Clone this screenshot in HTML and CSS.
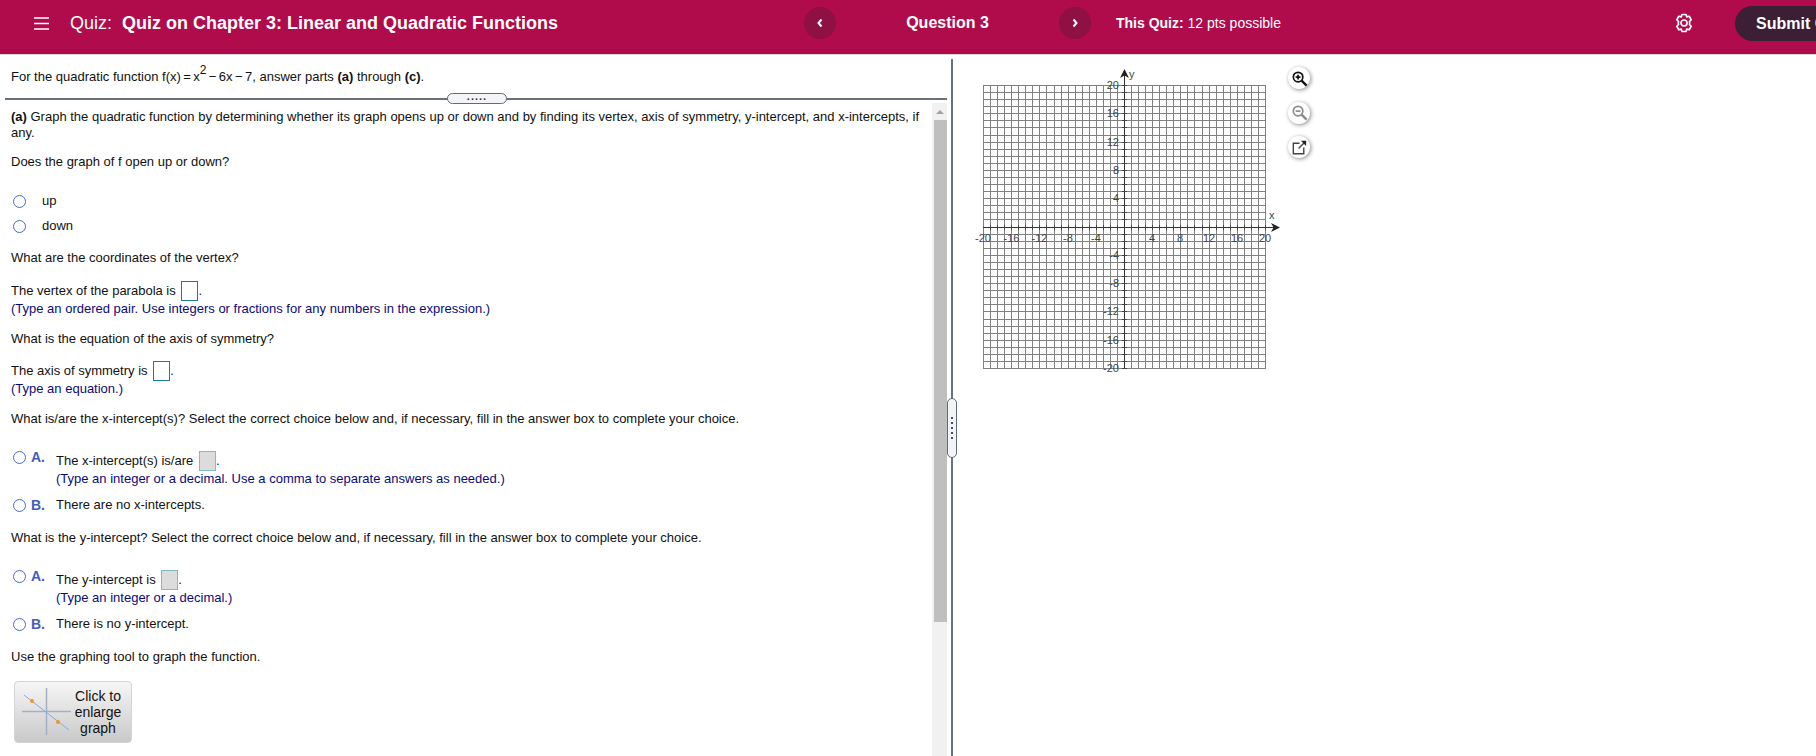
FILE: index.html
```html
<!DOCTYPE html>
<html lang="en">
<head>
<meta charset="utf-8">
<title>Quiz on Chapter 3</title>
<link rel="stylesheet" href="styles.css">
</head>
<body>
<header class="topbar">
  <div class="title-block">
    <svg class="burger" viewBox="0 0 15 13"><path d="M0 1h15M0 6.500h15M0 12h15"/></svg>
    <span class="quiz-title">Quiz:&nbsp; <b>Quiz on Chapter 3: Linear and Quadratic Functions</b></span>
  </div>
  <button class="nav-btn"><svg viewBox="0 0 10 12"><path d="M6.500 2.500 3.500 6l3 3.500"/></svg></button>
  <div class="question-no">Question 3</div>
  <button class="nav-btn"><svg viewBox="0 0 10 12"><path d="M3.500 2.500 6.500 6l-3 3.500"/></svg></button>
  <div class="quiz-info"><b>This Quiz:</b> 12 pts possible</div>
  <svg class="gear" viewBox="0 0 20 20"><path d="M8 1.500h4l.8 2.400 2.400-.6 2 3.400L15.500 8.500a6 6 0 0 1 0 3l1.700 1.800-2 3.400-2.400-.6-.8 2.400H8l-.8-2.400-2.400.6-2-3.400 1.700-1.800a6 6 0 0 1 0-3L2.800 6.700l2-3.400 2.400.6z"/><circle cx="10" cy="10" r="3"/></svg>
  <div class="submit">Submit Quiz</div>
</header>

<main class="workspace">
  <section class="question-pane">
    <div class="statement">For the quadratic function <span class="math">f(x) = x<sup>2</sup> &minus; 6x &minus; 7,</span> answer parts <b>(a)</b> through <b>(c)</b>.</div>
    <div class="rule"><span class="grip-h">.....</span></div>
    <div class="pane-body">
      <div class="question">
        <p><b>(a)</b> Graph the quadratic function by determining whether its graph opens up or down and by finding its vertex, axis of symmetry, y-intercept, and x-intercepts, if<br>any.</p>
        <p class="g13">Does the graph of f open up or down?</p>
        <label class="choice g23"><i class="radio"></i><span>up</span></label>
        <label class="choice g9"><i class="radio"></i><span>down</span></label>
        <p class="g16">What are the coordinates of the vertex?</p>
        <p class="g15 box-line">The vertex of the parabola is <i class="answer"></i>.</p>
        <p class="hint">(Type an ordered pair. Use integers or fractions for any numbers in the expression.)</p>
        <p class="g14">What is the equation of the axis of symmetry?</p>
        <p class="g14 box-line">The axis of symmetry is <i class="answer"></i>.</p>
        <p class="hint">(Type an equation.)</p>
        <p class="g14">What is/are the x-intercept(s)? Select the correct choice below and, if necessary, fill in the answer box to complete your choice.</p>
        <div class="option g24">
          <i class="radio"></i><b class="letter">A.</b>
          <div class="option-text">
            <p class="box-line">The x-intercept(s) is/are <i class="answer off"></i>.</p>
            <p class="hint">(Type an integer or a decimal. Use a comma to separate answers as needed.)</p>
          </div>
        </div>
        <div class="option g10 single">
          <i class="radio"></i><b class="letter">B.</b>
          <div class="option-text"><p>There are no x-intercepts.</p></div>
        </div>
        <p class="g17">What is the y-intercept? Select the correct choice below and, if necessary, fill in the answer box to complete your choice.</p>
        <div class="option g24">
          <i class="radio"></i><b class="letter">A.</b>
          <div class="option-text">
            <p class="box-line">The y-intercept is <i class="answer off"></i>.</p>
            <p class="hint">(Type an integer or a decimal.)</p>
          </div>
        </div>
        <div class="option g10 single">
          <i class="radio"></i><b class="letter">B.</b>
          <div class="option-text"><p>There is no y-intercept.</p></div>
        </div>
        <p class="g17">Use the graphing tool to graph the function.</p>
        <button class="enlarge">
          <svg viewBox="0 0 54 54"><path class="ax" d="M27.500 3v47M3 26.500h49"/><path class="ln" d="M5 10 50 45"/><circle cx="13" cy="16" r="2"/><circle cx="39" cy="37" r="2"/></svg>
          <span>Click to<br>enlarge<br>graph</span>
        </button>
      </div>
      <div class="scrollbar"><span class="arrow"></span><span class="thumb"></span></div>
    </div>
  </section>

  <div class="divider"><span class="grip-v"><i></i><i></i><i></i><i></i><i></i></span></div>

  <section class="graph-pane">
    <svg class="graph" viewBox="970 65 320 320">
      <path class="grid" d="M983.500 85V368M990.500 85V368M997.500 85V368M1004.500 85V368M1011.500 85V368M1018.500 85V368M1025.500 85V368M1032.500 85V368M1039.500 85V368M1046.500 85V368M1054.500 85V368M1061.500 85V368M1068.500 85V368M1075.500 85V368M1082.500 85V368M1089.500 85V368M1096.500 85V368M1103.500 85V368M1110.500 85V368M1117.500 85V368M1131.500 85V368M1138.500 85V368M1145.500 85V368M1152.500 85V368M1159.500 85V368M1166.500 85V368M1173.500 85V368M1180.500 85V368M1187.500 85V368M1194.500 85V368M1202.500 85V368M1209.500 85V368M1216.500 85V368M1223.500 85V368M1230.500 85V368M1237.500 85V368M1244.500 85V368M1251.500 85V368M1258.500 85V368M1265.500 85V368"/>
      <path class="grid" d="M983 85.500H1266M983 92.500H1266M983 99.500H1266M983 106.500H1266M983 113.500H1266M983 120.500H1266M983 127.500H1266M983 135.500H1266M983 142.500H1266M983 149.500H1266M983 156.500H1266M983 163.500H1266M983 170.500H1266M983 177.500H1266M983 184.500H1266M983 191.500H1266M983 198.500H1266M983 205.500H1266M983 212.500H1266M983 219.500H1266M983 234.500H1266M983 241.500H1266M983 248.500H1266M983 255.500H1266M983 262.500H1266M983 269.500H1266M983 276.500H1266M983 283.500H1266M983 290.500H1266M983 297.500H1266M983 304.500H1266M983 311.500H1266M983 319.500H1266M983 326.500H1266M983 333.500H1266M983 340.500H1266M983 347.500H1266M983 354.500H1266M983 361.500H1266M983 368.500H1266"/>
      <path class="axis" d="M1124.500 74V368M983 227.500H1276"/>
      <path class="ticks" d="M1122 92.500h5M1122 99.500h5M1122 106.500h5M1122 113.500h5M1122 120.500h5M1122 127.500h5M1122 135.500h5M1122 142.500h5M1122 149.500h5M1122 156.500h5M1122 163.500h5M1122 170.500h5M1122 177.500h5M1122 184.500h5M1122 191.500h5M1122 198.500h5M1122 205.500h5M1122 212.500h5M1122 219.500h5M1122 234.500h5M1122 241.500h5M1122 248.500h5M1122 255.500h5M1122 262.500h5M1122 269.500h5M1122 276.500h5M1122 283.500h5M1122 290.500h5M1122 297.500h5M1122 304.500h5M1122 311.500h5M1122 319.500h5M1122 326.500h5M1122 333.500h5M1122 340.500h5M1122 347.500h5M1122 354.500h5M1122 361.500h5M1122 85.500h5M1122 368.500h5M990.500 225v5M997.500 225v5M1004.500 225v5M1011.500 225v5M1018.500 225v5M1025.500 225v5M1032.500 225v5M1039.500 225v5M1046.500 225v5M1054.500 225v5M1061.500 225v5M1068.500 225v5M1075.500 225v5M1082.500 225v5M1089.500 225v5M1096.500 225v5M1103.500 225v5M1110.500 225v5M1117.500 225v5M1131.500 225v5M1138.500 225v5M1145.500 225v5M1152.500 225v5M1159.500 225v5M1166.500 225v5M1173.500 225v5M1180.500 225v5M1187.500 225v5M1194.500 225v5M1202.500 225v5M1209.500 225v5M1216.500 225v5M1223.500 225v5M1230.500 225v5M1237.500 225v5M1244.500 225v5M1251.500 225v5M1258.500 225v5M1265.500 225v5"/>
      <path class="tip" d="M1124.500 69 1129 78 1124.500 75.500 1120 78zM1280 227.500 1271 223 1273.500 227.500 1271 232z"/>
      <text class="yl" x="1119" y="89">20</text><text class="yl" x="1119" y="117">16</text><text class="yl" x="1119" y="146">12</text><text class="yl" x="1119" y="174">8</text><text class="yl" x="1119" y="202">4</text>
      <text class="yl" x="1119" y="259">-4</text><text class="yl" x="1119" y="287">-8</text><text class="yl" x="1119" y="315">-12</text><text class="yl" x="1119" y="344">-16</text><text class="yl" x="1119" y="372">-20</text>
      <text class="xl" x="983" y="242">-20</text><text class="xl" x="1011.500" y="242">-16</text><text class="xl" x="1039.500" y="242">-12</text><text class="xl" x="1068" y="242">-8</text><text class="xl" x="1096" y="242">-4</text>
      <text class="xl" x="1152" y="242">4</text><text class="xl" x="1180" y="242">8</text><text class="xl" x="1209" y="242">12</text><text class="xl" x="1237" y="242">16</text><text class="xl" x="1265" y="242">20</text>
      <text class="nm" x="1129" y="78">y</text><text class="nm" x="1269" y="219">x</text>
    </svg>
    <div class="tools">
      <span class="tool"><svg viewBox="0 0 20 20"><circle class="dk" cx="8.500" cy="8.500" r="5"/><path class="dk" d="M6 8.500h5M8.500 6v5"/><path class="dk thick" d="M12 12l5.500 5.500"/></svg></span>
      <span class="tool"><svg viewBox="0 0 20 20"><circle class="gr" cx="8.500" cy="8.500" r="5"/><path class="gr" d="M6 8.500h5"/><path class="gr thick" d="M12 12l5.500 5.500"/></svg></span>
      <span class="tool"><svg viewBox="0 0 20 20"><path class="pop" d="M10 5.500H3.500v11h11V10"/><path class="pop" d="M9 11l6-6"/><path class="pop-tip" d="M11.500 3h5.500v5.500z"/></svg></span>
    </div>
  </section>
</main>
</body>
</html>
```
FILE: styles.css
```css
* { box-sizing: border-box; }
html, body { margin: 0; height: 100%; overflow: hidden; background: #fff; }
body { font-family: "Liberation Sans", Arial, sans-serif; color: #111; font-size: 13px; line-height: 16px; width: 1816px; height: 756px; }
button { font: inherit; padding: 0; }

.topbar { height: 55px; padding-bottom: 8px; background: #b00b4a; border-bottom: 1px solid #d9d9d9; display: flex; align-items: center; overflow: hidden; color: #fff; }
.topbar > * { flex: none; }
.title-block { width: 804px; padding-left: 34px; display: flex; align-items: center; }
.burger { width: 15px; height: 13px; margin-right: 21px; flex: none; }
.burger path { stroke: #fff; stroke-width: 1.500; fill: none; }
.quiz-title { font-size: 18px; white-space: nowrap; }
.nav-btn { width: 32px; height: 32px; border-radius: 50%; border: 0; background: #8f1043; display: flex; align-items: center; justify-content: center; }
.nav-btn svg { width: 10px; height: 12px; }
.nav-btn path { stroke: #fff; stroke-width: 2; fill: none; }
.question-no { width: 223px; text-align: center; font-size: 16px; font-weight: bold; }
.quiz-info { width: 583px; padding-left: 25px; font-size: 14px; white-space: nowrap; }
.gear { width: 20px; height: 20px; }
.gear path, .gear circle { stroke: #fff; stroke-width: 1.700; fill: none; stroke-linejoin: round; }
.submit { margin-left: 41px; height: 35px; width: 130px; padding-left: 21px; line-height: 35px; background: #3a1f35; border-radius: 18px; font-size: 16px; font-weight: bold; white-space: nowrap; }

.workspace { display: flex; height: 701px; }
.question-pane { width: 947px; flex: none; display: flex; flex-direction: column; }
.statement { height: 43px; padding: 14px 0 0 11px; }
.math { word-spacing: -1.200px; }
.statement sup { font-size: 12px; line-height: 0; vertical-align: 7px; }
.rule { height: 2px; margin-left: 5px; background: #66727c; position: relative; flex: none; }
.grip-h { position: absolute; left: 442px; top: -5px; width: 60px; height: 11px; background: #f3f4f8; border: 1px solid #5f6b75; border-radius: 6px; font-size: 11px; font-weight: bold; line-height: 5px; letter-spacing: 1px; text-align: center; color: #333; }
.pane-body { flex: 1; display: flex; min-height: 0; }
.question { flex: 1; padding: 9px 0 0 11px; white-space: nowrap; }
.question p { margin: 0; }
.g9 { margin-top: 9px !important; }
.g10 { margin-top: 10px !important; }
.g13 { margin-top: 13px !important; }
.g14 { margin-top: 14px !important; }
.g15 { margin-top: 15px !important; }
.g16 { margin-top: 16px !important; }
.g17 { margin-top: 17px !important; }
.g23 { margin-top: 23px !important; }
.g24 { margin-top: 24px !important; }
.box-line { height: 20px; line-height: 18px; display: flex; align-items: center; white-space: pre; }
.hint { color: #0a0a7a; height: 16px; }
.answer { display: inline-block; width: 17px; height: 20px; margin-left: 2px; border: 1px solid #1f7a9c; background: #fff; flex: none; }
.answer.off { background: #dcdcdc; border-color: #82b8c8; }
.radio { display: block; width: 13px; height: 13px; margin-left: 2px; border-radius: 50%; border: 1.500px solid #4a69c6; background: #fff; flex: none; }
.choice { display: flex; align-items: center; height: 16px; }
.choice .radio { margin-right: 16px; }
.option { display: flex; align-items: flex-start; }
.option .radio { margin-top: 0; margin-right: 5px; }
.option .letter { width: 25px; color: #3f5cc0; flex: none; font-size: 14px; margin-top: -2px; }
.option-text { flex: none; }
.option.single { height: 16px; }
.option.single .radio { margin-top: 2px; }
.option.single .letter { margin-top: 0; }
.enlarge { display: flex; align-items: center; width: 118px; height: 62px; margin: 16px 0 0 3px; border: 1px solid #d4d4d4; border-radius: 4px; background: linear-gradient(#f6f6f6, #c9c9c9); font-size: 14px; color: #111; text-align: center; }
.enlarge svg { width: 54px; height: 54px; margin-left: 4px; flex: none; }
.enlarge .ax { stroke: #a3b0c4; stroke-width: 1.500; fill: none; }
.enlarge .ln { stroke: #86a8e6; stroke-width: 1; fill: none; }
.enlarge circle { fill: #f7941e; }
.enlarge span { width: 50px; flex: none; }
.scrollbar { width: 15px; margin-top: 3px; background: #f1f1f1; flex: none; display: flex; flex-direction: column; align-items: flex-end; position: relative; }
.arrow { width: 0; height: 0; border-left: 4px solid transparent; border-right: 4px solid transparent; border-bottom: 4px solid #a3a3a3; margin: 7px 3px 6px 0; }
.thumb { width: 13px; height: 502px; background: #bfbfbf; }

.divider { width: 2px; margin: 4px 0 0 4px; background: #66727c; position: relative; flex: none; }
.grip-v { position: absolute; left: -4px; top: 339px; width: 10px; height: 60px; background: #f3f4f8; border: 1px solid #5f6b75; border-radius: 6px; display: flex; flex-direction: column; align-items: center; justify-content: center; gap: 3px; }
.grip-v i { width: 2px; height: 2px; background: #3f4a70; }

.graph-pane { flex: 1; display: flex; align-items: flex-start; padding: 10px 0 0 17px; }
.graph { width: 320px; height: 320px; flex: none; }
.grid { stroke: #808080; stroke-width: 1; fill: none; }
.axis { stroke: #333; stroke-width: 1; fill: none; }
.ticks { stroke: #444; stroke-width: 1; fill: none; }
.tip { fill: #222; }
.graph text { font-size: 11px; fill: #444; font-family: "Liberation Sans", Arial, sans-serif; }
.yl { text-anchor: end; }
.xl { text-anchor: middle; }
.tools { display: flex; flex-direction: column; gap: 12.500px; margin: 2px 0 0 -2px; }
.tool { width: 22px; height: 22px; border-radius: 50%; background: #fff; box-shadow: 1px 1px 4px rgba(0,0,0,.45); display: flex; align-items: center; justify-content: center; }
.tool svg { width: 19px; height: 19px; }
.tool .dk, .tool .gr { fill: none; stroke-width: 1.800; }
.tool .dk { stroke: #111; }
.tool .gr { stroke: #8a8a8a; }
.tool .thick { stroke-width: 2.400; }
.pop { fill: none; stroke: #444; stroke-width: 1.500; }
.pop-tip { fill: #222; }
```
